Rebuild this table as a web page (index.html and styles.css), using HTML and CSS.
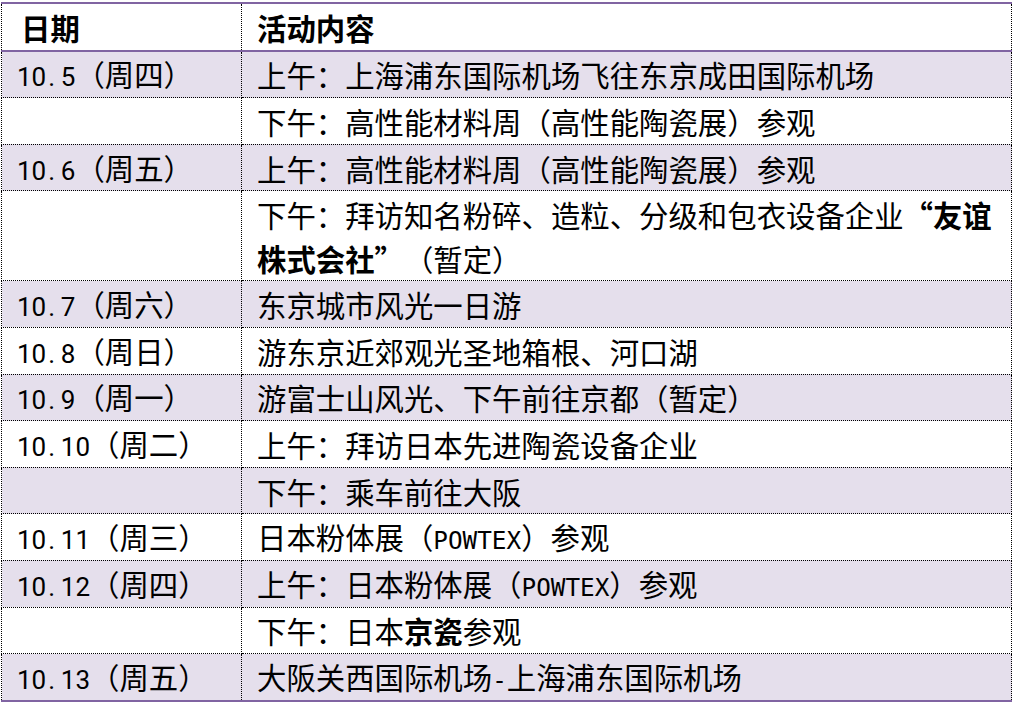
FILE: index.html
```html
<!DOCTYPE html>
<html lang="zh-CN">
<head>
<meta charset="utf-8">
<title>日程安排</title>
<link rel="stylesheet" href="styles.css">
</head>
<body>
<table class="sched">
  <colgroup><col class="c1"><col class="c2"></colgroup>
  <thead>
    <tr><th class="h1">日期</th><th>活动内容</th></tr>
  </thead>
  <tbody>
    <tr class="alt"><td><span class="n">10<span class="dot">.</span>5</span>（周四）</td><td>上午：上海浦东国际机场飞往东京成田国际机场</td></tr>
    <tr><td></td><td>下午：高性能材料周（高性能陶瓷展）参观</td></tr>
    <tr class="alt"><td><span class="n">10<span class="dot">.</span>6</span>（周五）</td><td>上午：高性能材料周（高性能陶瓷展）参观</td></tr>
    <tr class="tall"><td></td><td class="two">下午：拜访知名粉碎、造粒、分级和包衣设备企业<b><span class="ql">“</span>友谊<br>株式会社<span class="qr">”</span></b>（暂定）</td></tr>
    <tr class="alt"><td><span class="n">10<span class="dot">.</span>7</span>（周六）</td><td>东京城市风光一日游</td></tr>
    <tr><td><span class="n">10<span class="dot">.</span>8</span>（周日）</td><td>游东京近郊观光圣地箱根、河口湖</td></tr>
    <tr class="alt"><td><span class="n">10<span class="dot">.</span>9</span>（周一）</td><td>游富士山风光、下午前往京都（暂定）</td></tr>
    <tr><td><span class="n">10<span class="dot">.</span>10</span>（周二）</td><td>上午：拜访日本先进陶瓷设备企业</td></tr>
    <tr class="alt"><td></td><td>下午：乘车前往大阪</td></tr>
    <tr><td><span class="n">10<span class="dot">.</span>11</span>（周三）</td><td>日本粉体展（<span class="m">POWTEX</span>）参观</td></tr>
    <tr class="alt"><td><span class="n">10<span class="dot">.</span>12</span>（周四）</td><td>上午：日本粉体展（<span class="m">POWTEX</span>）参观</td></tr>
    <tr><td></td><td>下午：日本<b>京瓷</b>参观</td></tr>
    <tr class="alt"><td><span class="n">10<span class="dot">.</span>13</span>（周五）</td><td>大阪关西国际机场<span class="m">-</span>上海浦东国际机场</td></tr>
  </tbody>
</table>
</body>
</html>
```
FILE: styles.css
```css
html, body {
  background: #ffffff;
}
body {
  margin: 2px 0 0 1px;
}
.sched {
  border-collapse: collapse;
  table-layout: fixed;
  width: 1011px;
  font-family: "Noto Sans CJK SC", sans-serif;
  font-size: 29.4px;
  color: #000000;
  border-top: 2px solid #8064a2;
  border-bottom: 2px solid #8064a2;
}
.c1 {
  width: 240px;
}
.sched th,
.sched td {
  border-left: 1px dotted #000000;
  border-right: 1px dotted #000000;
  border-bottom: 1px dotted #000000;
  padding: 0 0 0 15px;
  height: 45.6px;
  line-height: 30px;
  vertical-align: middle;
  text-align: left;
  white-space: nowrap;
}
.sched th {
  font-weight: bold;
  border-bottom: 2px solid #8064a2;
  border-top: 2px solid #8064a2;
}
.sched th.h1 {
  padding-left: 19px;
}
.sched tbody tr:last-child td {
  border-bottom: 2px solid #8064a2;
}
.sched tr.alt td {
  background: #e5dfec;
}
.sched tr.tall td {
  height: 89px;
}
.sched td.two {
  line-height: 44px;
}
.sched b {
  font-weight: bold;
}
.ql,
.qr {
  display: inline-block;
  width: 1em;
  line-height: 1;
}
.ql {
  text-align: right;
}
.qr {
  text-align: left;
}
.n {
  font-family: Roboto, sans-serif;
  font-size: 26px;
  line-height: 1;
}
.dot {
  display: inline-block;
  width: 14.6px;
  padding-left: 2px;
  box-sizing: border-box;
}
.m {
  font-family: "DejaVu Sans Mono", monospace;
  font-size: 24.3px;
  line-height: 1;
}
```
